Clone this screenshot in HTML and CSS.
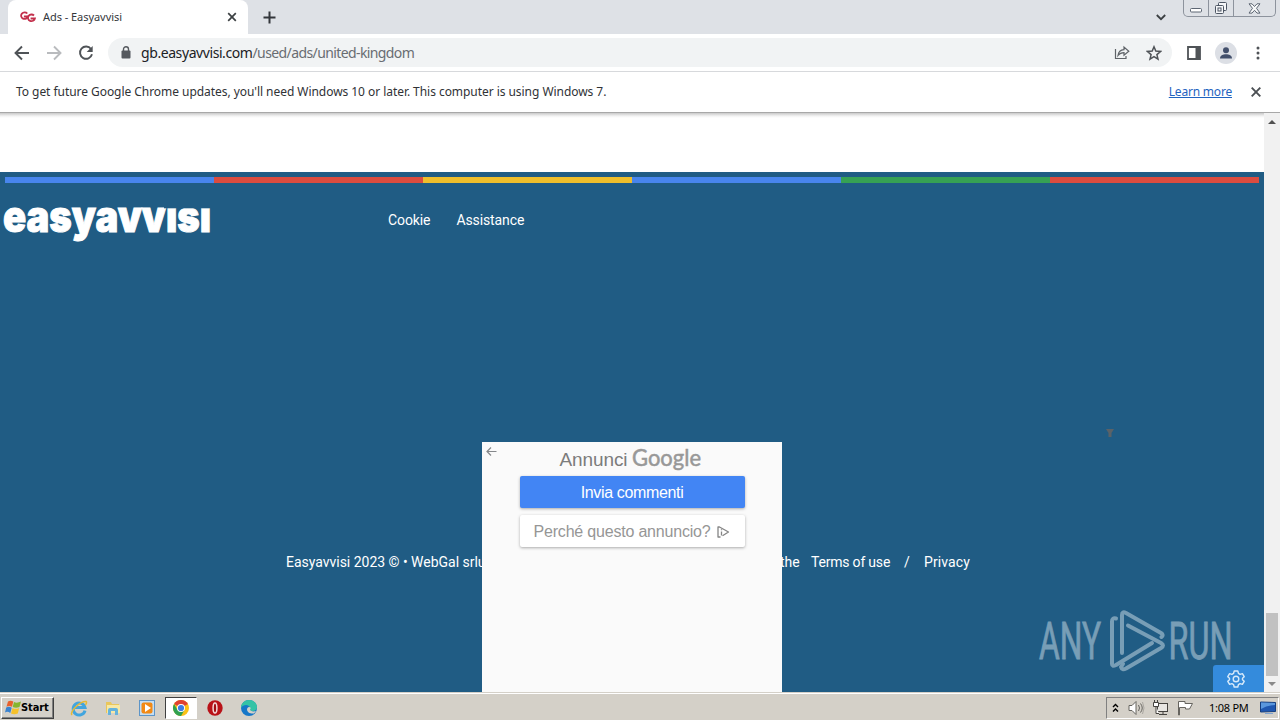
FILE: index.html
```html
<!DOCTYPE html>
<html lang="en">
<head>
<meta charset="utf-8">
<title>Ads - Easyavvisi</title>
<link rel="stylesheet" href="styles.css">
</head>
<body>
<header class="tabs">
  <div class="tab">
    <svg class="favicon" width="16" height="12" viewBox="0 0 16 12" fill="none" stroke="#c3304c" stroke-width="1.800"><path d="M7.300 2.500A3.500 3.300 0 1 0 8 5.500H4.800V6.500"/><path d="M14 4.500A3.500 3.300 0 1 0 14.900 7.500H11.500V8.500"/></svg>
    <span class="tab-title">Ads - Easyavvisi</span>
    <svg class="tab-close" width="10" height="10" viewBox="0 0 10 10" stroke="#3c4043" stroke-width="1.7"><path d="M1.200 1.200l7.600 7.600M8.800 1.200L1.200 8.800"/></svg>
  </div>
  <svg class="new-tab" width="13" height="13" viewBox="0 0 13 13" stroke="#33363b" stroke-width="2"><path d="M6.500 .5v12M.5 6.500h12"/></svg>
  <svg class="tab-search" width="10" height="7" viewBox="0 0 10 7" fill="none" stroke="#3c4043" stroke-width="1.8"><path d="M.8 1l4.200 4.200L9.200 1"/></svg>
  <div class="window-buttons">
    <span class="wb"><svg width="12" height="5" viewBox="0 0 12 5" fill="#fff" stroke="#5d6673"><rect x=".5" y=".5" width="11" height="3.500" rx="1"/></svg></span>
    <span class="wb"><svg width="14" height="14" viewBox="0 0 14 14" fill="#f5f6f8" stroke="#4c5563"><rect x="4.500" y="1.500" width="8" height="8" rx="1"/><rect x="1.500" y="4.500" width="8" height="8" rx="1"/><rect x="4" y="7" width="3" height="3"/></svg></span>
    <span class="wb wide"><svg width="13" height="11" viewBox="0 0 13 11" fill="#f8f9fa" stroke="#5d6673"><path d="M1 .8h3l2.500 2.700L9 .8h3L8.500 5.300l3.500 4.800H9L6.500 7.300 4 10.100H1l3.500-4.800z"/></svg></span>
  </div>
</header>
<nav class="toolbar">
  <svg class="nav-icon" width="16" height="16" viewBox="0 0 16 16" fill="none" stroke="#4f5357" stroke-width="1.900"><path d="M15 8H2M8 1.500L1.500 8 8 14.500"/></svg>
  <svg class="nav-icon" width="16" height="16" viewBox="0 0 16 16" fill="none" stroke="#b9bbbe" stroke-width="1.900"><path d="M1 8h13M8 1.500L14.500 8 8 14.500"/></svg>
  <svg class="nav-icon" width="16" height="16" viewBox="0 0 16 16" fill="none" stroke="#4f5357" stroke-width="1.900"><path d="M13 4A6.100 6.100 0 1 0 14 9.300"/><path d="M14.700 1v6H8.700z" fill="#4f5357" stroke="none"/></svg>
  <div class="omnibox">
    <svg width="10" height="13" viewBox="0 0 10 13"><rect x=".5" y="4.500" width="9" height="8" rx="1" fill="#55595e"/><path d="M2.500 5V3.200a2.500 2.500 0 0 1 5 0V5" fill="none" stroke="#55595e" stroke-width="1.400"/></svg>
    <span class="url"><span class="host">gb.easyavvisi.com</span>/used/ads/united-kingdom</span>
    <svg class="share" width="16" height="15" viewBox="0 0 16 15" fill="none" stroke="#5f6368" stroke-width="1.200"><path d="M1.500 4v9.500h10.500v-2.500"/><path d="M4 10.500C4.500 6.500 7 4.800 10 4.700V2l4.800 4.200L10 10.300V7.700C7.500 7.700 5.500 8.500 4 10.500z"/></svg>
    <svg width="16" height="16" viewBox="0 0 16 16" fill="none" stroke="#4f5357" stroke-width="1.500"><path d="M8 1.800l1.800 4.300 4.700.4-3.600 3.100 1.100 4.600L8 11.700l-4 2.500 1.100-4.600L1.500 6.500l4.700-.4z"/></svg>
  </div>
  <svg class="panel" width="14" height="14" viewBox="0 0 14 14"><path d="M1 1h12v12H1z" fill="none" stroke="#4f5357" stroke-width="1.800"/><path d="M8.500 1H13v12H8.500z" fill="#4f5357"/></svg>
  <svg class="avatar" width="22" height="22" viewBox="0 0 22 22"><circle cx="11" cy="11" r="11" fill="#dcdfe5"/><g fill="#43506c"><circle cx="11" cy="8.200" r="3"/><path d="M5 16.500c0-3 3-4.300 6-4.300s6 1.300 6 4.300z"/></g></svg>
  <svg class="menu" width="4" height="14" viewBox="0 0 4 14" fill="#4f5357"><circle cx="2" cy="2" r="1.500"/><circle cx="2" cy="7" r="1.500"/><circle cx="2" cy="12" r="1.500"/></svg>
</nav>
<div class="infobar">
  <span class="info-text">To get future Google Chrome updates, you'll need Windows 10 or later. This computer is using Windows 7.</span>
  <a class="learn">Learn more</a>
  <svg class="info-close" width="10" height="10" viewBox="0 0 10 10" stroke="#4b4f53" stroke-width="1.900"><path d="M.7.7l8.600 8.600M9.300.7L.7 9.300"/></svg>
</div>
<div class="content">
  <main class="page">
    <footer class="footer">
      <div class="stripes"><i class="blue"></i><i class="red"></i><i class="yellow"></i><i class="blue"></i><i class="green"></i><i class="red"></i></div>
      <div class="footer-top">
        <svg class="logo" width="210" height="34" viewBox="0 0 210 34"><text x="-1" y="24" textLength="208" lengthAdjust="spacingAndGlyphs">easyavvisi</text><rect x="160" y="-14" width="50" height="14.300"/></svg>
        <a>Cookie</a><a>Assistance</a>
      </div>
      <div class="legal"><span class="copy">Easyavvisi 2023 © • WebGal srlu</span><span class="the">the</span><a class="terms">Terms of use</a><span class="slash">/</span><a class="privacy">Privacy</a></div>
    </footer>
    <section class="ad">
      <svg class="ad-back" width="11" height="10" viewBox="0 0 11 10" fill="none" stroke="#85888b" stroke-width="1.200"><path d="M10.500 4.500H1M5 .5L1 4.500 5 8.500"/></svg>
      <div class="ad-title"><span>Annunci</span><svg width="70" height="28" viewBox="0 0 70 28"><text x="0" y="24" textLength="69" lengthAdjust="spacingAndGlyphs">Google</text></svg></div>
      <div class="btn primary"><span>Invia commenti</span></div>
      <div class="btn why"><span>Perché questo annuncio?</span><svg width="14" height="14" viewBox="0 0 14 14" fill="none" stroke="#858585" stroke-width="1.300" stroke-linejoin="round"><path d="M4.500 12H2V2h1.500L12.500 7 6.500 10.800"/><path d="M5.500 6.500v4M5.500 4.200v1"/></svg></div>
    </section>
    <svg class="marker" width="8" height="8" viewBox="0 0 8 8" fill="#5b6267"><path d="M0 0h8L5.500 4v4h-3V4z"/></svg>
    <svg class="watermark" width="210" height="70" viewBox="1035 605 210 70">
      <text x="1039" y="659" textLength="62" lengthAdjust="spacingAndGlyphs">ANY</text>
      <text x="1168.500" y="659" textLength="64" lengthAdjust="spacingAndGlyphs">RUN</text>
      <g fill="none" stroke-width="4" stroke-linejoin="round" stroke-linecap="round"><path d="M1116 618.500q-4-1-4 3V664q0 3 4 1l36-22"/><path d="M1122 653v-38q0-4 4-2l35 20q3 2 .5 4"/><path d="M1128 625.500l33 17.500q4 2.500 0 5l-35 20.500q-4 2-5-1.500l2-3"/></g>
    </svg>
    <div class="settings"><svg width="18" height="18" viewBox="0 0 18 18" fill="none" stroke="#d8eafa" stroke-width="1.400" stroke-linejoin="round"><path d="M7.200 1h3.600l.6 2.300 1.700 1 2.300-.7 1.800 3.100L15.500 8.300v1.400l1.700 1.600-1.800 3.100-2.300-.7-1.700 1-.6 2.300H7.200l-.6-2.300-1.700-1-2.300.7-1.800-3.100 1.700-1.600V8.300L.8 6.700l1.800-3.100 2.300.7 1.700-1z"/><circle cx="9" cy="9" r="2.800"/></svg></div>
  </main>
  <aside class="scrollbar"><i class="arrow up"></i><i class="thumb"></i><i class="arrow down"></i></aside>
</div>
<div class="taskbar">
  <div class="start"><svg width="16" height="15" viewBox="0 0 16 15"><path d="M3 1.500Q5.500 0 8.300 1.500L7 6.800Q4.200 5.200 1.500 6.700z" fill="#e8602c"/><path d="M9 2Q12 3.500 16 1.500L14.500 7Q11 8.500 7.700 7z" fill="#86b52e"/><path d="M1.200 7.500Q4 6 6.700 7.700L5.300 13Q2.500 11 0 12.500z" fill="#3a83d0"/><path d="M7.500 8Q10.500 9.700 14.200 8L12.800 13.500Q9 15 6 13.400z" fill="#f6c12b"/></svg><span>Start</span></div>
  <div class="quick">
    <svg width="18" height="18" viewBox="0 0 18 18" fill="none"><path d="M15 11.500A6 6 0 1 1 15 8.500H5" stroke="#42a5de" stroke-width="3"/><path d="M2 16C-1 13 10 2 16 2.500c1 .5.5 2-.5 3.500" stroke="#e5b935" stroke-width="1.500"/></svg>
    <svg width="18" height="18" viewBox="0 0 18 18"><path d="M2 3h5l1 2h7v9H2z" fill="#e9c65b"/><path d="M3 6h13v8H3z" fill="#f7e8a4"/><path d="M4 16v-5q0-2 2-2h6q2 0 2 2v5h-3v-4H7v4z" fill="#65b3dc"/></svg>
    <svg width="18" height="18" viewBox="0 0 18 18"><rect x="1.500" y="1.500" width="15" height="15" fill="#c5def3" stroke="#5d95c8"/><rect x="3.500" y="3.500" width="11" height="11" rx="2" fill="#f28a16"/><path d="M7 5l6 4-6 4z" fill="#fff"/></svg>
    <div class="active"><svg width="18" height="18" viewBox="0 0 18 18"><circle cx="9" cy="9" r="8" fill="#fbc116"/><path d="M9 9L2.070 5A8 8 0 0 1 15.930 5z" fill="#df4132"/><path d="M2.070 5A8 8 0 0 0 9 17l3.500-6L9 9 5.500 11z" fill="#30a151"/><circle cx="9" cy="9" r="4" fill="#fff"/><circle cx="9" cy="9" r="3.100" fill="#3d7de4"/></svg></div>
    <svg width="18" height="18" viewBox="0 0 18 18"><circle cx="9" cy="9" r="7.700" fill="#b91218"/><ellipse cx="9" cy="9" rx="1.900" ry="5" fill="#a00d12" stroke="#f5dada" stroke-width="1.500"/></svg>
    <svg width="18" height="18" viewBox="0 0 18 18"><circle cx="9" cy="9" r="8" fill="#1677c8"/><path d="M1 9C1 4 5 1 9 1c5 0 8 3.500 8 7 0 3-2 4-5 4-2 0-3-1-2-2C11 6 4 4 1 9z" fill="#35c3a6"/><path d="M9 8c2 0 2 1.500 1 2.500 0 1.500 3 2.500 6 1.500l-2 2.500C10 15 7 13 7 10.500 7 9 8 8 9 8z" fill="#d4d0c8"/></svg>
  </div>
  <div class="tray">
    <svg width="7" height="10" viewBox="0 0 7 10" fill="none" stroke="#000" stroke-width="1.400"><path d="M1 4l2.500-2.500L6 4M1 8.500L3.500 6 6 8.500"/></svg>
    <svg class="t-sound" width="17" height="16" viewBox="0 0 17 16" fill="#fff" stroke="#66645f"><path d="M1 5.500h3L8 1.500v13l-4-4H1z"/><path d="M10.500 5q2 3 0 6M12.500 3.500q3.500 4.500 0 9" fill="none"/><path d="M14.500 2q3 6 0 12" fill="none" stroke="#aaa7a0"/></svg>
    <svg class="t-net" width="17" height="16" viewBox="0 0 17 16" fill="#e8e6e2" stroke="#45433f"><rect x="5.500" y="3.500" width="10" height="8"/><path d="M7 14.500h8M11 12v3"/><path d="M1.500 2.500h5v4h-5zM2.500 0v3M5.500 0v3M4 6v7.500h3" fill="#fff"/></svg>
    <svg class="t-flag" width="17" height="16" viewBox="0 0 17 16" fill="#fff" stroke="#66645f"><path d="M1.500 15V1.500h6.500v2h7.500L12.500 9H8.500V7.500h-6V15z"/></svg>
    <span class="clock">1:08 PM</span>
    <svg width="16" height="14" viewBox="0 0 16 14"><path d="M.5 1l15 .5v9L.5 11z" fill="#1f57b0" stroke="#153e7e"/><path d="M1 1.500l14 .5v2Q7 4 1 8z" fill="#5a97dd"/><path d="M5 12h8v1H5z" fill="#7fa3cf"/></svg>
  </div>
</div>
</body>
</html>
```

FILE: styles.css
```css
* { box-sizing: border-box; }
body { margin: 0; width: 1280px; height: 720px; overflow: hidden; display: flex; flex-direction: column; background: #fff; font-family: "Noto Sans", sans-serif; }
svg { display: block; flex: none; }
.tabs { height: 34px; flex: none; background: #dee1e6; display: flex; align-items: flex-start; padding-left: 8px; }
.tab { width: 240px; height: 34px; background: #fff; border-radius: 8px 8px 0 0; display: flex; align-items: center; padding: 0 11px 0 12px; }
.tab-title { margin: -2px 0 0 7px; font-size: 11px; letter-spacing: -0.05px; color: #35383c; flex: 1; white-space: nowrap; }
.new-tab { margin: 11px 0 0 15px; }
.tab-search { margin: 14px 17px 0 auto; }
.window-buttons { display: flex; height: 17px; width: 93px; margin-right: 4px; border: 1px solid #8d939d; border-top: 0; border-radius: 0 0 5px 5px; }
.wb { width: 25px; display: flex; align-items: center; justify-content: center; border-right: 1px solid #8d939d; }
.wb:first-child { padding-top: 4px; }
.wb.wide { flex: 1; border: 0; }
.toolbar { height: 38px; flex: none; display: flex; align-items: center; padding-left: 14px; border-bottom: 1px solid #d7d9dc; }
.nav-icon { margin-right: 16px; }
.omnibox { width: 1064px; height: 29px; margin-left: -2px; border-radius: 15px; background: #f1f3f4; display: flex; align-items: center; padding: 0 10px 0 13px; }
.url { flex: 1; margin-left: 10px; font-size: 14px; color: #696d72; white-space: nowrap; letter-spacing: -0.6px; }
.host { color: #202124; letter-spacing: -0.42px; }
.share { margin-right: 16px; }
.panel { margin-left: 15px; }
.avatar { margin-left: 14px; }
.menu { margin-left: 19px; }
.infobar { height: 41px; flex: none; display: flex; align-items: center; padding: 0 19px 2px 16px; font-size: 12px; color: #303236; border-bottom: 1px solid #a8a8a8; }
.info-text { flex: 1; white-space: nowrap; letter-spacing: -0.05px; }
.learn { color: #1f63c0; text-decoration: underline; margin-right: 19px; white-space: nowrap; letter-spacing: -0.2px; }
.info-close { margin-top: 2px; }
.content { flex: 1; display: flex; min-height: 0; }
.page { position: relative; width: 1264px; padding-top: 59px; background: linear-gradient(#c9c9c9, #f2f2f2 3px, #fff 5px); display: flex; overflow: hidden; }
.footer { flex: 1; background: #205c84; padding: 5px; color: #fff; font-family: Roboto, sans-serif; font-size: 14px; }
.stripes { display: flex; height: 6px; }
.stripes i { flex: 1; }
.blue { background: #4885ed; }
.red { background: #db4c3f; }
.yellow { background: #eebe2c; }
.green { background: #36a154; }
.footer-top { display: flex; align-items: center; height: 34px; margin: 22px 0 0 -1px; }
.logo { margin: 3px 174px 0 0; overflow: visible; align-self: flex-start; }
.logo text { font: 900 43px "Inter", sans-serif; fill: #fff; stroke: #fff; stroke-width: 1; }
.logo rect { fill: #205c84; }
.footer-top a { margin: -4px 26px 0 0; letter-spacing: -.1px; }
.legal { display: flex; align-items: center; height: 20px; margin: 313px 0 0 281px; white-space: nowrap; }
.copy { width: 494px; letter-spacing: -.02px; }
.the { width: 31px; }
.terms { width: 93px; letter-spacing: -.2px; }
.slash { width: 20px; }
.privacy { letter-spacing: .1px; }
.ad { position: absolute; left: 482px; top: 329px; width: 300px; height: 250px; background: #fafafa; font-family: "Liberation Sans", sans-serif; display: flex; flex-direction: column; align-items: center; gap: 6px; }
.ad-back { position: absolute; left: 4px; top: 5px; }
.ad-title { height: 28px; display: flex; align-items: center; gap: 5px; font-size: 19px; color: #7c7c7c; margin-left: -2px; letter-spacing: -.1px; }
.ad-title span { padding-top: 7px; }
.ad-title svg { overflow: visible; }
.ad-title text { font: 400 23px "Lato", sans-serif; letter-spacing: 0; fill: #989898; stroke: #989898; stroke-width: .5; }
.btn { width: 225px; height: 32px; border-radius: 2px; background: #fff; box-shadow: 0 1px 3px #aaa; display: flex; align-items: center; justify-content: center; gap: 6px; font-size: 16px; letter-spacing: -.2px; color: #969696; white-space: nowrap; padding-top: 1px; }
.primary { background: #4285f4; color: #fff; letter-spacing: -.35px; margin-bottom: 1px; }
.marker { position: absolute; left: 1106px; top: 316px; }
.watermark { position: absolute; left: 1035px; top: 492px; opacity: .55; overflow: visible; }
.watermark text { font: 400 52px Roboto, sans-serif; fill: #c0d4e0; stroke: #c0d4e0; stroke-width: .8; }
.watermark g { stroke: #c0d4e0; }
.settings { position: absolute; right: 0; bottom: 0; width: 51px; height: 27px; border-radius: 3px 0 0 0; background: #348bdc; display: flex; align-items: center; justify-content: center; padding-right: 5px; }
.scrollbar { width: 16px; background: #f1f1f1; display: flex; flex-direction: column; align-items: center; }
.arrow { border: 4px solid transparent; }
.up { border-bottom-color: #505050; border-top: 0; margin-top: 7px; }
.down { border-top-color: #8a8a8a; border-bottom: 0; margin: 6px 0 6px; }
.thumb { width: 12px; height: 63px; background: #c1c1c1; margin-top: auto; }
.taskbar { height: 28px; flex: none; background: #d4d0c8; border-top: 1px solid #d4d0c8; box-shadow: inset 0 1px #fff; display: flex; align-items: center; padding: 2px 1px 0; }
.start { width: 53px; height: 22px; border: 1px solid; border-color: #fff #404040 #404040 #fff; box-shadow: inset -1px -1px #808080; display: flex; align-items: center; padding-left: 3px; font: bold 11px "DejaVu Sans Condensed", sans-serif; letter-spacing: -.1px; color: #000; }
.quick { display: flex; align-items: center; margin-left: 16px; gap: 16px; }
.active { width: 32px; height: 22px; background: #fff; border: 1px solid; border-color: #404040 #fff #fff #404040; display: flex; align-items: center; justify-content: center; margin: 0 -7px; }
.tray { margin-left: auto; width: 173px; height: 22px; border: 1px solid; border-color: #808080 #fff #fff #808080; display: flex; align-items: center; padding-left: 5px; }
.t-sound { margin-left: 9px; }
.t-net { margin-left: 7px; }
.t-flag { margin-left: 8px; }
.clock { width: 51px; margin: -1px 0 0 15px; font-size: 11px; letter-spacing: -.25px; color: #000; white-space: nowrap; }
```
